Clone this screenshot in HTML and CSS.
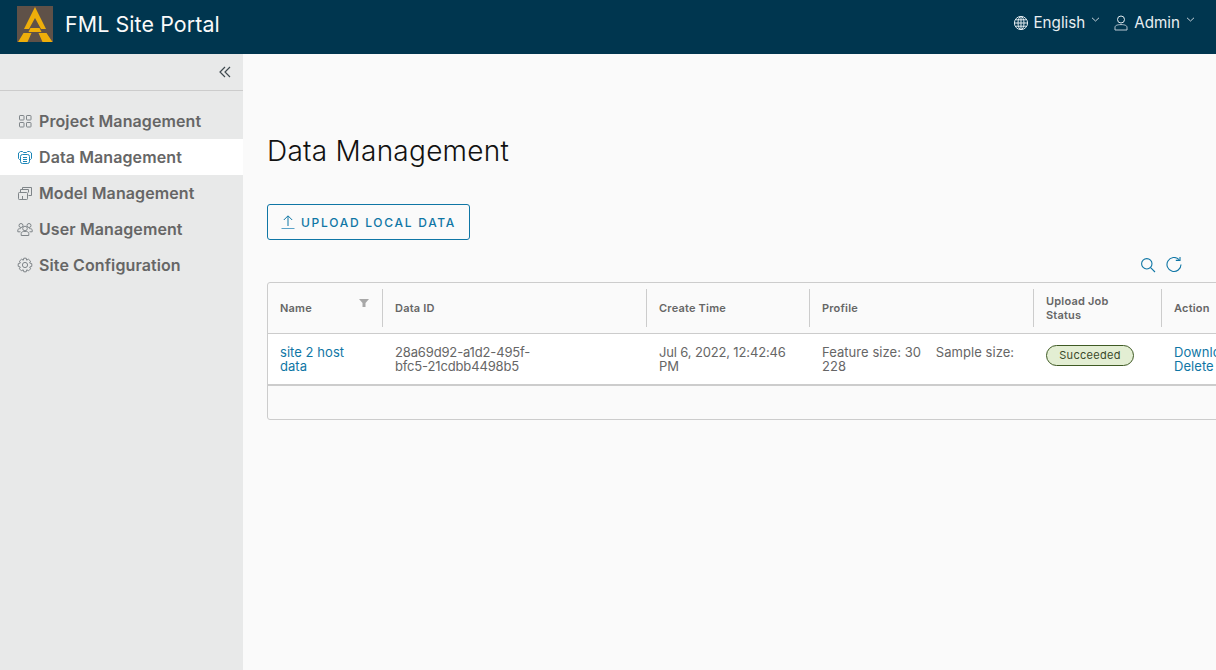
FILE: index.html
```html
<!DOCTYPE html>
<html>
<head>
<meta charset="utf-8"/>
<title>FML Site Portal</title>
<link rel="stylesheet" href="styles.css">
</head>
<body>
<div class="header">
    <div class="branding">
        <svg class="logo" viewBox="0 0 36 36" width="36" height="36">
            <rect width="36" height="36" fill="#5f5148"/>
            <path d="M18 1L29 23H24L18 12L12 23H7Z" fill="#eeae0a"/>
            <path d="M13.5 22H22.5L24.5 26H11.5Z" fill="#eeae0a"/>
            <path d="M6.5 27H14.5L10.5 36H1Z M21.5 27H29.5L35.5 36H25.5Z" fill="#eeae0a"/>
        </svg>
        <span class="title">FML Site Portal</span>
    </div>
    <div class="header-actions">
        <div class="header-menu">
            <svg class="head-icon globe" viewBox="0 0 16 16" width="16" height="16" fill="none" stroke="#e4ecf0" stroke-width="1">
                <circle cx="8" cy="8" r="6.6"/>
                <ellipse cx="8" cy="8" rx="3" ry="6.6"/>
                <path d="M8 1.4V14.6M1.4 8H14.6M2.4 4.8H13.6M2.4 11.2H13.6"/>
            </svg>
            <span>English</span>
            <svg class="caret" viewBox="0 0 9 5" width="9" height="5" fill="none" stroke="#c5d2d9" stroke-width="1"><path d="M1 .8L4.5 4L8 .8"/></svg>
        </div>
        <div class="header-menu">
            <svg class="head-icon" viewBox="0 0 14 16" width="14" height="16" fill="none" stroke="#e4ecf0" stroke-width="1">
                <circle cx="7" cy="4.5" r="3.5"/>
                <path d="M1 15V12.2C1 10.6 3.2 9.6 7 9.6C10.8 9.6 13 10.6 13 12.2V15Z" stroke="#b9c8d3"/>
            </svg>
            <span>Admin</span>
            <svg class="caret" viewBox="0 0 9 5" width="9" height="5" fill="none" stroke="#c5d2d9" stroke-width="1"><path d="M1 .8L4.5 4L8 .8"/></svg>
        </div>
    </div>
</div>
<div class="layout">
    <div class="sidebar">
        <div class="collapse-row">
            <svg viewBox="0 0 12 12" width="12" height="12" fill="none" stroke="#404a50" stroke-width="1.2"><path d="M6 1L1 6L6 11M11 1L6 6L11 11"/></svg>
        </div>
        <ul class="nav">
            <li class="nav-item">
                <svg viewBox="0 0 16 16" width="16" height="16" fill="none" stroke="#7f8589" stroke-width="1">
                    <rect x="2.5" y="2.5" width="4.5" height="4.5" rx=".6"/><rect x="9.5" y="2.5" width="4.5" height="4.5" rx=".6"/>
                    <rect x="2.5" y="9.5" width="4.5" height="4.5" rx=".6"/><rect x="9.5" y="9.5" width="4.5" height="4.5" rx=".6"/>
                </svg>
                Project Management
            </li>
            <li class="nav-item active">
                <svg viewBox="0 0 16 16" width="16" height="16" fill="none" stroke="#1c86b8" stroke-width="1">
                    <path d="M3.5 10.5H2.5L1.5 9.5V4L3.5 2.5H5.5L6.5 3.5H9.5L10.5 2.5H12.5L14.5 4V9.5L13.5 10.5H12.5"/>
                    <rect x="3.5" y="5.5" width="9" height="9" rx="2"/>
                    <path d="M6 8.5H10M6 10.5H10M6 12.5H10"/>
                </svg>
                Data Management
            </li>
            <li class="nav-item">
                <svg viewBox="0 0 16 16" width="16" height="16" fill="none" stroke="#7f8589" stroke-width="1">
                    <path d="M5.5 4.5V2.5H14.5V10.5H11.5"/>
                    <path d="M3.5 7.5V4.5H11.5V7.5"/>
                    <rect x="1.5" y="7.5" width="9" height="7" rx=".8"/>
                    <path d="M5.5 14.5V11"/>
                </svg>
                Model Management
            </li>
            <li class="nav-item">
                <svg viewBox="0 0 16 16" width="16" height="16" fill="none" stroke="#7f8589" stroke-width="1">
                    <circle cx="4" cy="4.5" r="2"/><circle cx="12" cy="4.5" r="2"/><circle cx="8" cy="7.5" r="2.3"/>
                    <path d="M4.2 14.5V12.3C4.2 11 6 10.4 8 10.4C10 10.4 11.8 11 11.8 12.3V14.5Z"/>
                    <path d="M3.5 10.8H.8V9C.8 8 2 7.6 3.8 7.6M12.5 10.8H15.2V9C15.2 8 14 7.6 12.2 7.6"/>
                </svg>
                User Management
            </li>
            <li class="nav-item">
                <svg viewBox="0 0 16 16" width="16" height="16" fill="none" stroke="#7f8589" stroke-width="1">
                    <circle cx="8" cy="8" r="2.6"/>
                    <path d="M6.8 1.2H9.2L9.7 3.2L11.4 2.2L13.6 4.2L12.6 6L14.8 6.7V9.3L12.7 10L13.6 11.8L11.6 13.8L9.8 12.8L9.2 14.8H6.8L6.2 12.8L4.4 13.8L2.4 11.8L3.3 10L1.2 9.3V6.7L3.4 6L2.4 4.2L4.6 2.2L6.3 3.2Z"/>
                </svg>
                Site Configuration
            </li>
        </ul>
    </div>
    <div class="content">
        <h1 class="page-title">Data Management</h1>
        <button class="btn-upload">
            <svg viewBox="0 0 14 16" width="14" height="16" fill="none" stroke="#0f76a5" stroke-width="1"><path d="M7 12V2M2.8 6L7 1.8L11.2 6"/><path d="M0.5 14.5H13.5" stroke="#5aa2c8"/></svg>
            UPLOAD LOCAL DATA
        </button>
        <div class="tools">
            <svg viewBox="0 0 16 16" width="16" height="16" fill="none" stroke="#0f76a5" stroke-width="1.1"><circle cx="6.8" cy="6.8" r="5.2"/><path d="M10.6 10.6L15 15"/></svg>
            <svg viewBox="0 0 16 16" width="16" height="16" fill="none" stroke="#0f76a5" stroke-width="1.1"><path d="M13 2.6A7 7 0 1 0 15 7.5"/><path d="M9.8 3.4H14V0"/></svg>
        </div>
        <div class="grid">
            <table class="grid-table">
                <colgroup>
                    <col class="col-name"><col class="col-id"><col class="col-time"><col class="col-profile"><col class="col-status"><col class="col-action">
                </colgroup>
                <thead>
                    <tr>
                        <th>
                            <div class="th-cell first">
                                Name
                                <svg class="filter" viewBox="0 0 10 8" width="10" height="8"><path d="M0 0H10L6.5 4V8H3.5V4Z" fill="#a8a8a8"/></svg>
                            </div>
                        </th>
                        <th><div class="th-cell">Data ID</div></th>
                        <th><div class="th-cell">Create Time</div></th>
                        <th><div class="th-cell">Profile</div></th>
                        <th><div class="th-cell narrow">Upload Job Status</div></th>
                        <th><div class="th-cell">Action</div></th>
                    </tr>
                </thead>
                <tbody>
                    <tr>
                        <td class="first-cell"><a class="link" href="#">site 2 host data</a></td>
                        <td class="tight"><span class="data-id">28a69d92-a1d2-495f-bfc5-21cdbb4498b5</span></td>
                        <td class="tight">Jul 6, 2022, 12:42:46 PM</td>
                        <td>Feature size: 30 &nbsp;&nbsp; Sample size: 228</td>
                        <td><span class="badge">Succeeded</span></td>
                        <td class="actions"><a class="link" href="#">Download</a><a class="link" href="#">Delete</a></td>
                    </tr>
                </tbody>
            </table>
            <div class="grid-footer"></div>
        </div>
    </div>
</div>
</body>
</html>
```

FILE: styles.css
```css
html, body {
    margin: 0;
    padding: 0;
    height: 670px;
    overflow: hidden;
}
body {
    font-family: Inter, "Noto Sans", sans-serif;
    color: #565656;
    background: #fafafa;
}
.header {
    height: 54px;
    background: #00364f;
    color: #fafafa;
    display: flex;
    justify-content: space-between;
}
.branding {
    display: flex;
    align-items: center;
    padding: 0 0 6px 17px;
}
.logo {
    margin-right: 12px;
}
.title {
    font-size: 21.4px;
    letter-spacing: 0.1px;
}
.header-actions {
    display: flex;
    padding: 14px 21px 0 0;
    gap: 14px;
    font-size: 15.2px;
    color: #e8eef1;
}
.header-menu {
    display: flex;
    align-items: flex-start;
    line-height: 18px;
}
.head-icon {
    margin: 1px 6px 0 0;
}
.head-icon.globe {
    margin-right: 4px;
}
.caret {
    margin: 3px 0 0 6px;
}
.layout {
    display: flex;
    height: 616px;
}
.sidebar {
    width: 243px;
    flex: none;
    background: #e8e9e9;
}
.collapse-row {
    height: 36px;
    border-bottom: 1px solid #ccc;
    display: flex;
    justify-content: flex-end;
    align-items: center;
    padding-right: 12px;
}
.nav {
    list-style: none;
    margin: 12px 0 0;
    padding: 0;
}
.nav-item {
    height: 36px;
    display: flex;
    align-items: center;
    gap: 6px;
    padding-left: 17px;
    font-size: 16px;
    font-weight: 600;
    letter-spacing: 0.1px;
    color: #666;
}
.nav-item.active {
    background: #fff;
}
.content {
    flex: 1;
    min-width: 0;
    overflow: hidden;
    padding: 0 0 0 24px;
}
.page-title {
    font-size: 28px;
    font-weight: 300;
    letter-spacing: 0.25px;
    line-height: 36px;
    color: #111;
    margin: 79px 0 35px;
}
.btn-upload {
    display: flex;
    align-items: center;
    gap: 6px;
    height: 36px;
    width: 203px;
    padding: 0 0 0 13px;
    border: 1px solid #0f76a5;
    border-radius: 3px;
    background: transparent;
    color: #0f76a5;
    font-family: inherit;
    font-size: 12px;
    font-weight: 500;
    letter-spacing: 1.72px;
}
.tools {
    width: 915px;
    display: flex;
    justify-content: flex-end;
    gap: 10px;
    margin: 17px 0 9px;
}
.grid {
    width: 1000px;
    border: 1px solid #ccc;
    border-radius: 3px;
    box-sizing: border-box;
}
.grid-table {
    width: 100%;
    table-layout: fixed;
    border-collapse: collapse;
    font-size: 13px;
    line-height: 14px;
    letter-spacing: 0.05px;
}
.col-name { width: 114px; }
.col-id { width: 264px; }
.col-time { width: 163px; }
.col-profile { width: 224px; }
.col-status { width: 128px; }
.grid-table th {
    height: 50px;
    padding: 0;
    text-align: left;
    font-size: 11px;
    font-weight: 600;
    letter-spacing: 0.2px;
    color: #666;
    border-bottom: 1px solid #ccc;
}
.th-cell {
    height: 38px;
    display: flex;
    align-items: center;
    padding: 0 12px;
    border-left: 1px solid #ccc;
    position: relative;
}
.th-cell.first {
    border-left: 0;
}
.th-cell.narrow {
    padding-right: 40px;
}
.filter {
    position: absolute;
    top: 10px;
    right: 13px;
}
.grid-table td {
    height: 50px;
    padding: 0 12px 0 13px;
    vertical-align: middle;
    background: #fff;
    border-bottom: 2px solid #ccc;
    color: #666;
}
.grid-table td.first-cell {
    padding-left: 12px;
}
.grid-table td.tight {
    letter-spacing: -0.15px;
}
.data-id {
    display: block;
    width: 150px;
}
.link {
    color: #0f76a5;
    text-decoration: none;
}
.actions .link {
    display: block;
    white-space: nowrap;
}
.badge {
    display: block;
    box-sizing: border-box;
    width: 88px;
    height: 21px;
    margin-bottom: 7px;
    line-height: 19px;
    text-align: center;
    font-size: 11px;
    letter-spacing: 0.3px;
    color: #3a4a2a;
    background: #e3eed3;
    border: 1px solid #3f5a24;
    border-radius: 11px;
}
.grid-footer {
    height: 33px;
}
```
